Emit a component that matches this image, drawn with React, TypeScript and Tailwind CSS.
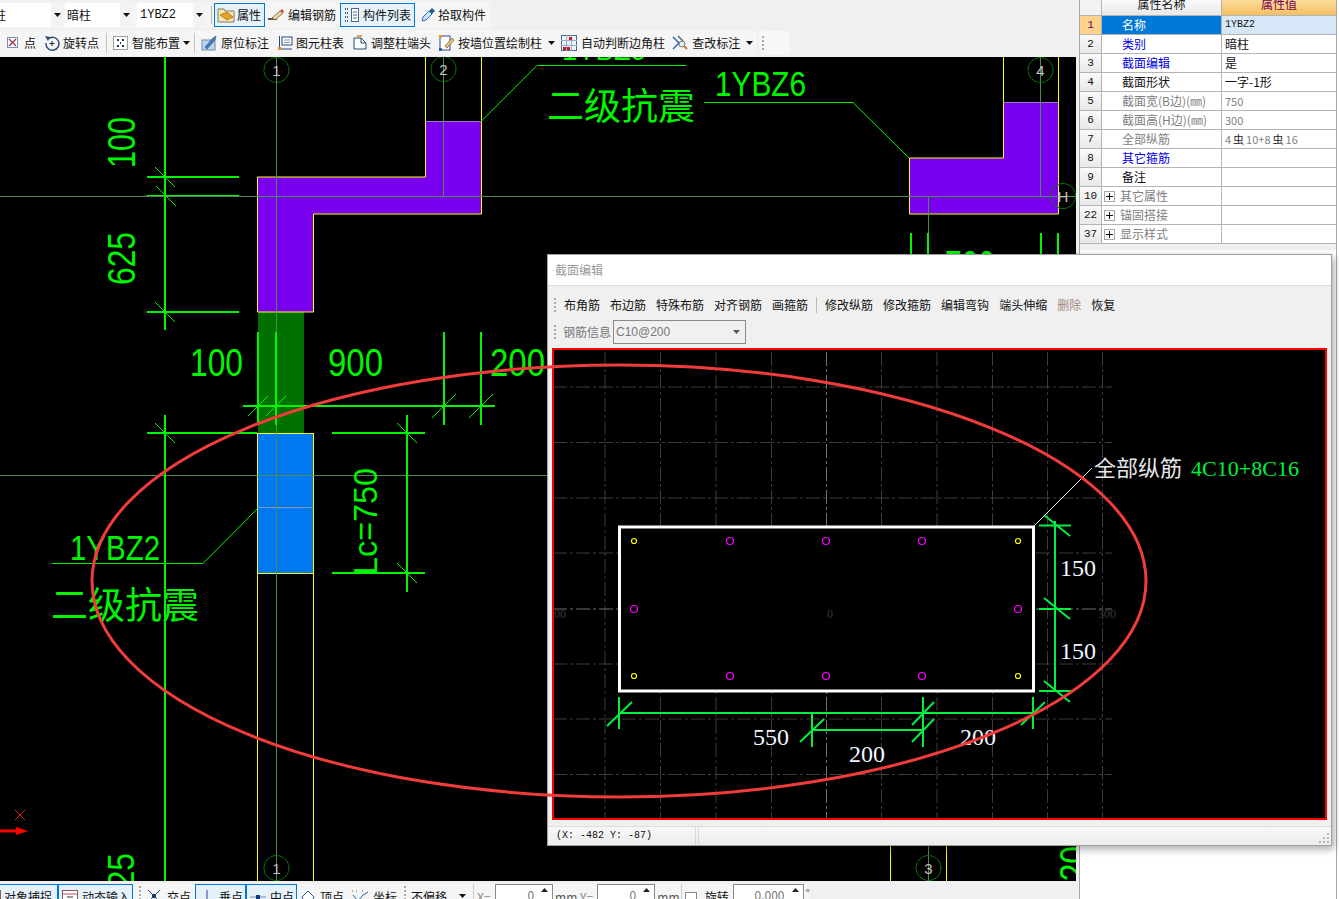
import type { ReactNode } from "react";

const CJK = "'Noto Sans CJK SC', sans-serif";
const SANS = "'Liberation Sans', sans-serif";
const SERIF = "'Liberation Serif', serif";
const GREEN = "#00f500";
const AXIS = "#4c8c4c";
const YELLOW = "#ffff00";

function Caret() {
  return (
    <svg width="7" height="4" className="shrink-0">
      <path d="M0 0h7L3.5 4z" fill="#111" />
    </svg>
  );
}

function Grip() {
  return <div className="h-[14px] w-0 shrink-0 border-l-2 border-dotted border-[#a8a8a8]" />;
}

function Sep() {
  return <div className="h-[20px] w-px shrink-0 bg-[#c4c4c4]" />;
}

function Ic({ children, w = 16 }: { children: ReactNode; w?: number }) {
  return (
    <svg width={w} height="16" viewBox={`0 0 ${w} 16`} fill="none" className="shrink-0">
      {children}
    </svg>
  );
}

const icons = {
  prop: (
    <Ic w={18}>
      <path d="M1 2h6l1 2h9v11H1z" fill="#f5e6b8" stroke="#8a7a55" />
      <path d="M3 8l7-3 6 5-6 3z" fill="#e9a227" stroke="#9a6a10" strokeWidth=".7" />
    </Ic>
  ),
  edit: (
    <Ic>
      <path d="M0 12h9" stroke="#222" strokeWidth="1.5" />
      <path d="M4 11l8-7 3 2-8 7z" fill="#f1d9a0" stroke="#554" strokeWidth=".8" />
      <path d="M12 4l2-2 2 2-1 2z" fill="#c9503a" />
    </Ic>
  ),
  list: (
    <Ic>
      <path d="M1 2h3M1 6h3M1 10h3M1 14h3" stroke="#555" strokeDasharray="1 1" strokeWidth="2" />
      <rect x="7.500" y="1.500" width="7" height="13" fill="#fff" stroke="#4a6a90" />
      <path d="M9 5h4M9 8h4M9 11h4" stroke="#4a6a90" />
    </Ic>
  ),
  pick: (
    <Ic>
      <path d="M2 14l1-4 6-6 3 3-6 6z" fill="#cfe6fa" stroke="#2a6fb0" />
      <path d="M9 4l3-3 3 3-3 3z" fill="#1f5d99" />
    </Ic>
  ),
  point: (
    <Ic w={11}>
      <rect x=".5" y="2.500" width="10" height="10" fill="#fff" stroke="#7d8fb0" />
      <path d="M2 4l7 7M9 4l-7 7" stroke="#a0304a" strokeWidth="1.200" />
    </Ic>
  ),
  rotate: (
    <Ic>
      <path d="M4 4a6.500 6.500 0 1 1-2 4" stroke="#2a4a70" strokeWidth="1.400" />
      <path d="M1 1l5 1-2 4z" fill="#2a4a70" />
      <path d="M8 6v5M5.500 8.500h5" stroke="#222" />
    </Ic>
  ),
  smart: (
    <Ic w={15}>
      <rect x=".5" y="1.500" width="14" height="13" fill="#fff" stroke="#444" strokeDasharray="1 1" />
      <path d="M4 5h2M9 5h2M4 11h2M9 11h2M7 8h1" stroke="#1d3a66" strokeWidth="2" />
    </Ic>
  ),
  origin: (
    <Ic>
      <rect x="1" y="5" width="13" height="10" fill="#bcd4ec" stroke="#6d8cb0" />
      <path d="M4 12l8-9 3-2-1 4-8 9z" fill="#3f78b5" stroke="#2a5a90" strokeWidth=".6" />
    </Ic>
  ),
  table: (
    <Ic>
      <path d="M2.500 1v13H15" stroke="#2a4a80" />
      <rect x="5" y="2" width="10" height="8" fill="#fff" stroke="#2a4a80" />
      <path d="M7 5h6M7 7.500h6" stroke="#7a9ac0" />
      <rect x="1" y="12" width="3" height="3" fill="#e08a20" />
    </Ic>
  ),
  adjust: (
    <Ic>
      <path d="M2 14V3h7l5 5v6z" fill="#fff" stroke="#2a4a70" />
      <path d="M9 3v5h5" stroke="#2a4a70" />
      <path d="M5 1h5" stroke="#d08a30" strokeWidth="1.500" />
    </Ic>
  ),
  wall: (
    <Ic>
      <rect x="1" y="1" width="10" height="14" fill="#fff" stroke="#2a4a90" />
      <rect x="0" y="0" width="3" height="3" fill="#e0a020" />
      <rect x="0" y="13" width="3" height="3" fill="#3060c0" />
      <path d="M6 11l7-8 2 2-7 8z" fill="#e9c27a" stroke="#7a5a20" strokeWidth=".7" />
    </Ic>
  ),
  corner: (
    <Ic>
      <rect x=".5" y=".5" width="15" height="15" fill="#eef2f8" stroke="#4a6a90" />
      <path d="M5.500 0v16M10.500 0v16M0 5.500h16M0 10.500h16" stroke="#9aaccc" />
      <path d="M2 12h3v3H2zM6 12h3v3H6zM8 2h3v3H8z" fill="#d01818" />
    </Ic>
  ),
  check: (
    <Ic>
      <path d="M1 2l6 6-6 6" stroke="#2a5ab0" strokeWidth="1.400" />
      <path d="M6 1l5 5" stroke="#666" strokeWidth="1.500" />
      <circle cx="10" cy="9" r="3" fill="#dcecf8" stroke="#777" />
      <path d="M12 11l3 3" stroke="#c08030" strokeWidth="2" />
    </Ic>
  ),
  snap: (
    <Ic>
      <rect x=".5" y="1.500" width="15" height="13" fill="#fff" stroke="#8a5a5a" />
      <path d="M1 5h14" stroke="#b05050" />
      <path d="M5 8h6" stroke="#333" />
    </Ic>
  ),
  cross: (
    <Ic w={14}>
      <path d="M1 1l12 12M13 1L1 13" stroke="#2a4a80" />
      <rect x="5" y="5" width="4" height="4" fill="#123a80" />
    </Ic>
  ),
  perp: (
    <Ic>
      <path d="M8 1v11M0 13h16" stroke="#2a4a80" />
      <rect x="6" y="11" width="4" height="4" fill="#123a80" />
    </Ic>
  ),
  mid: (
    <Ic>
      <path d="M0 8h16" stroke="#7a90b0" />
      <rect x="6" y="6" width="4" height="4" fill="#123a80" />
    </Ic>
  ),
  vertex: (
    <Ic w={14}>
      <path d="M7 2l6 6-3 6H4L1 8z" fill="#fff" stroke="#2a5a9a" />
    </Ic>
  ),
  coord: (
    <Ic w={17}>
      <path d="M1 6l5 6 5-6 5-3" stroke="#2a5a9a" />
      <path d="M4 2h2M10 2h2M0 2h1" stroke="#555" strokeDasharray="1 1" />
      <rect x="5" y="10" width="3" height="3" fill="#123a80" />
    </Ic>
  ),
};

function Tool({ icon, label, className = "", gapClass = "gap-1" }: { icon: ReactNode; label: string; className?: string; gapClass?: string }) {
  return (
    <div className={`flex shrink-0 items-center whitespace-nowrap ${gapClass} ${className}`}>
      {icon}
      <span>{label}</span>
    </div>
  );
}

function Combo({ label, className, arrowClass }: { label: string; className: string; arrowClass: string }) {
  return (
    <div className={`flex h-[24px] shrink-0 items-center bg-white ${className}`}>
      <span className="flex-1 whitespace-nowrap">{label}</span>
      <div className={`flex h-full w-[12px] items-center justify-center bg-[#f3f3f3] ${arrowClass}`}>
        <Caret />
      </div>
    </div>
  );
}

function TopBars() {
  return (
    <div className="h-[57px] shrink-0 bg-[#f0f0f0] text-[12px] leading-none text-[#111]">
      <div className="flex h-[29px] items-start pt-[2px]">
        <div className="flex h-[26px] w-[491px] shrink-0 items-center rounded-r bg-[#f5f5f5]">
          <Combo label="柱" className="w-[63px] -indent-[6px]" arrowClass="ml-auto" />
          <Combo label="暗柱" className="ml-[2px] w-[67px] pl-[2px]" arrowClass="" />
          <Combo label="1YBZ2" className="ml-[5px] w-[68px] pl-[3px] font-['Liberation_Mono',monospace]" arrowClass="" />
          <div className="ml-[6px] mr-[2px] h-[18px] w-px bg-[#bbb]" />
          <Tool icon={icons.prop} label="属性" className="h-[24px] w-[51px] border border-[#0078d7] bg-[#e5f1fb] pl-[2px]" gapClass="gap-[2px]" />
          <Tool icon={icons.edit} label="编辑钢筋" className="ml-[3px] w-[72px]" />
          <Tool icon={icons.list} label="构件列表" className="h-[24px] w-[75px] border border-[#0078d7] bg-[#e5f1fb] pl-[3px]" gapClass="gap-[3px]" />
          <Tool icon={icons.pick} label="拾取构件" className="ml-[5px]" gapClass="gap-[2px]" />
        </div>
      </div>
      <div className="flex h-[27px] items-center">
        <div className="flex h-[26px] w-[757px] shrink-0 items-center rounded-r bg-[#f5f5f5] pl-[7px]">
          <Tool icon={icons.point} label="点" gapClass="gap-[6px]" />
          <Tool icon={icons.rotate} label="旋转点" className="ml-[8px]" gapClass="gap-[3px]" />
          <div className="ml-[7px] mr-[6px]"><Sep /></div>
          <Tool icon={icons.smart} label="智能布置" />
          <div className="ml-[3px]"><Caret /></div>
          <div className="ml-[4px] mr-[6px]"><Sep /></div>
          <Tool icon={icons.origin} label="原位标注" />
          <Tool icon={icons.table} label="图元柱表" className="ml-[8px]" gapClass="gap-[3px]" />
          <Tool icon={icons.adjust} label="调整柱端头" className="ml-[8px]" gapClass="gap-[3px]" />
          <Tool icon={icons.wall} label="按墙位置绘制柱" className="ml-[8px]" gapClass="gap-[3px]" />
          <div className="ml-[6px]"><Caret /></div>
          <Tool icon={icons.corner} label="自动判断边角柱" className="ml-[6px]" />
          <Tool icon={icons.check} label="查改标注" className="ml-[7px]" />
          <div className="ml-[6px]"><Caret /></div>
        </div>
        <div className="ml-[2px] flex h-[24px] w-[31px] items-center rounded bg-[#f7f7f7] pl-[3px]">
          <Grip />
        </div>
      </div>
    </div>
  );
}

function Spin({ value, className }: { value: string; className: string }) {
  return (
    <div className={`relative h-[26px] shrink-0 border border-[#8a8a8a] bg-white pt-[4px] text-right text-[#777] ${className}`}>
      <span className="mr-[18px]">{value}</span>
      <svg width="7" height="4" className="absolute right-[4px] top-[3px]">
        <path d="M0 4h7L3.500 0z" fill="#222" />
      </svg>
    </div>
  );
}

function BottomBar() {
  const on = "h-[26px] border border-[#0078d7] bg-[#e5f1fb] pl-[3px]";
  return (
    <div className="flex h-[18px] shrink-0 items-start overflow-hidden bg-[#f0f0f0] pt-[3px] text-[12px] leading-none text-[#111]">
      <div className="flex h-[26px] w-[810px] shrink-0 items-start rounded-r bg-[#f5f5f5]">
        <Tool icon={icons.snap} label="对象捕捉" className={`-ml-[19px] w-[77px] ${on}`} gapClass="gap-[3px]" />
        <Tool icon={icons.snap} label="动态输入" className={`w-[75px] ${on}`} gapClass="gap-[4px]" />
        <div className="ml-[6px] mt-[2px]"><Grip /></div>
        <Tool icon={icons.cross} label="交点" className="ml-[6px] h-[26px]" gapClass="gap-[6px]" />
        <Tool icon={icons.perp} label="垂点" className={`ml-[4px] w-[51px] ${on}`} gapClass="gap-[4px]" />
        <Tool icon={icons.mid} label="中点" className={`w-[51px] ${on}`} gapClass="gap-[4px]" />
        <Tool icon={icons.vertex} label="顶点" className="ml-[4px] h-[26px]" gapClass="gap-[5px]" />
        <Tool icon={icons.coord} label="坐标" className="ml-[8px] h-[26px]" />
        <div className="ml-[7px] mt-[2px]"><Grip /></div>
        <div className="ml-[5px] flex h-[26px] w-[50px] items-center">不偏移</div>
        <div className="mt-[10px]"><Caret /></div>
        <div className="ml-[7px] mr-[3px] h-[26px] w-px bg-[#ccc]" />
        <span className="mt-[7px] w-[19px] text-[#888]">X=</span>
        <Spin value="0" className="w-[58px]" />
        <span className="ml-[2px] mt-[7px] w-[26px] text-[#555]">mm</span>
        <span className="mt-[7px] w-[18px] text-[#888]">Y=</span>
        <Spin value="0" className="w-[58px]" />
        <span className="ml-[2px] mt-[7px] w-[25px] text-[#555]">mm</span>
        <div className="h-[26px] w-px bg-[#ccc]" />
        <div className="ml-[3px] mt-[8px] h-[12px] w-[12px] border border-[#888] bg-white" />
        <div className="ml-[8px] flex h-[26px] w-[29px] items-center">旋转</div>
        <Spin value="0.000" className="w-[71px]" />
        <span className="ml-[2px] mt-[3px] text-[#555]">°</span>
      </div>
    </div>
  );
}

function Tick({ x, y, dir = 1, r = 10 }: { x: number; y: number; dir?: number; r?: number }) {
  return <line x1={x - r} y1={y - dir * r} x2={x + r} y2={y + dir * r} stroke={GREEN} strokeWidth="1" />;
}

function AxisMark({ x, y, t }: { x: number; y: number; t: string }) {
  return (
    <g>
      <circle cx={x} cy={y} r="12.500" stroke="#0d7a0d" fill="none" strokeDasharray="7 .5" />
      <text x={x} y={y + 6} textAnchor="middle" fontFamily={SANS} fontSize="15" fill="#c4c4c4">
        {t}
      </text>
    </g>
  );
}

function VText({ x, y, len, size, t }: { x: number; y: number; len: number; size: number; t: string }) {
  return (
    <text transform={`translate(${x} ${y}) rotate(-90)`} fontFamily={SANS} fontSize={size} fill={GREEN} textLength={len} lengthAdjust="spacingAndGlyphs">
      {t}
    </text>
  );
}

function HText({ x, y, len, size = 38, t }: { x: number; y: number; len: number; size?: number; t: string }) {
  return (
    <text x={x} y={y} fontFamily={SANS} fontSize={size} fill={GREEN} textLength={len} lengthAdjust="spacingAndGlyphs">
      {t}
    </text>
  );
}

function MainCanvas() {
  return (
    <div className="flex min-h-0 flex-1 bg-[#f0f0f0]">
      <svg width="1076" height="824" viewBox="0 57 1076 824" className="block bg-black">
        {/* columns */}
        <path d="M425.500 57V121M481.500 57V121M1003.500 57V102M1058.500 57V102M257.500 573V881M313.500 573V881M890.500 600V881M946.500 600V881" stroke={YELLOW} />
        <rect x="258" y="312" width="46" height="121" fill="#007000" />
        <path d="M257.500 177H425.500V121.500H481.500V214H313.500V312H257.500Z" fill="#7a00f0" stroke={YELLOW} />
        <path d="M909.500 158H1003.500V102.500H1058.500V214H909.500Z" fill="#7a00f0" stroke={YELLOW} />
        <path d="M426 121.500H481M1004 102.500H1058" stroke="#9a7ac0" />
        <rect x="257.500" y="433.500" width="56" height="140" fill="#0078f0" stroke={YELLOW} strokeWidth="1" />
        <line x1="257" y1="507.500" x2="314" y2="507.500" stroke="#7a9ab8" />

        {/* axis lines */}
        <path d="M276.500 57V881M443.500 57V196M1040.500 57V196M928.500 196V881M0 196.500H1076M0 475.500H1076" stroke={AXIS} />
        <AxisMark x={276.500} y={70} t="1" />
        <AxisMark x={443.500} y={69} t="2" />
        <AxisMark x={1040.500} y={70} t="4" />
        <AxisMark x={1063} y={196} t="H" />
        <AxisMark x={928.500} y={868} t="3" />
        <AxisMark x={276.500} y={868} t="1" />

        {/* dimensions */}
        <path
          d="M165 57V330M147 177H239M147 312H239M165 415V881M147 433H257M332 433H425M332 573H425M407 415V592M243 406H495M258 332V425M276 332V425M444 332V425M481 332V425M911 233V255M928 233V255M1041 233V255M1058 233V255"
          stroke={GREEN}
          strokeWidth="2"
        />
        <line x1="147" y1="195.500" x2="239" y2="195.500" stroke={GREEN} />
        <Tick x={165} y={177} />
        <Tick x={166} y={196} />
        <Tick x={165} y={312} />
        <Tick x={165} y={433} />
        <Tick x={407} y={433} />
        <Tick x={407} y={573} />
        <Tick x={258} y={406} dir={-1} />
        <Tick x={276} y={406} dir={-1} />
        <Tick x={444} y={406} dir={-1} r={12} />
        <Tick x={481} y={406} dir={-1} r={12} />

        <VText x={135} y={168} len={51} size={38} t="100" />
        <VText x={135} y={285} len={53} size={38} t="625" />
        <VText x={377} y={575} len={107} size={33} t="Lc=750" />
        <VText x={134} y={906} len={53} size={36} t="625" />
        <VText x={1087} y={899} len={53} size={38} t="220" />
        <HText x={190} y={376} len={53} t="100" />
        <HText x={328} y={376} len={55} t="900" />
        <HText x={490} y={376} len={55} t="200" />
        <HText x={945} y={278} len={50} t="700" />
        <HText x={70} y={560} len={90} size={35} t="1YBZ2" />
        <HText x={715} y={96} len={91} size={35} t="1YBZ6" />
        <HText x={562} y={60} len={84} size={32} t="1YBZ5" />

        {/* leaders */}
        <path d="M481.500 121L537 65.500H686M704 102.500H853L909 158M52 563.500H203L257 509" stroke={GREEN} fill="none" />
        <text x="547" y="120" fontFamily={CJK} fontSize="37" fill={GREEN}>二级抗震</text>
        <text x="51" y="619" fontFamily={CJK} fontSize="37" fill={GREEN}>二级抗震</text>

        {/* origin marker */}
        <path d="M15 810l10 10M25 810L15 820" stroke="#e02020" />
        <path d="M0 829.500H16V827L28 831L16 835V832.500H0Z" fill="#ff0000" />
      </svg>
      <div className="w-[3px]" />
    </div>
  );
}

const rows: { n: string; name: string; val: ReactNode; tone: string; plus?: boolean; valTone?: string }[] = [
  { n: "2", name: "类别", val: "暗柱", tone: "text-[#0000e0]" },
  { n: "3", name: "截面编辑", val: "是", tone: "text-[#0000e0]" },
  { n: "4", name: "截面形状", val: "一字-1形", tone: "text-[#111]" },
  { n: "5", name: "截面宽(B边)(㎜)", val: "750", tone: "text-[#808080]", valTone: "text-[#808080] text-[11px]" },
  { n: "6", name: "截面高(H边)(㎜)", val: "300", tone: "text-[#808080]", valTone: "text-[#808080] text-[11px]" },
  {
    n: "7",
    name: "全部纵筋",
    val: (
      <>
        4<span className="mx-[2px] text-[#222]">虫</span>10+8<span className="mx-[2px] text-[#222]">虫</span>16
      </>
    ),
    tone: "text-[#808080]",
    valTone: "text-[#808080] text-[11px]",
  },
  { n: "8", name: "其它箍筋", val: "", tone: "text-[#0000e0]" },
  { n: "9", name: "备注", val: "", tone: "text-[#111]" },
  { n: "10", name: "其它属性", val: "", tone: "text-[#808080]", plus: true },
  { n: "22", name: "锚固搭接", val: "", tone: "text-[#808080]", plus: true },
  { n: "37", name: "显示样式", val: "", tone: "text-[#808080]", plus: true },
];

function Plus() {
  return (
    <div className="ml-[2px] flex h-[11px] w-[11px] shrink-0 items-center justify-center border border-[#aaa] bg-white">
      <svg width="7" height="7">
        <path d="M0 3.500h7M3.500 0v7" stroke="#111" />
      </svg>
    </div>
  );
}

function PropertyPanel() {
  return (
    <div className="h-full w-[260px] shrink-0 bg-white text-[12px] leading-none text-[#111]">
      <div className="h-full w-[258px] border-x border-[#a8a8a8]">
        <div className="h-[250px] w-[256px] bg-[#f0f0f0]">
          <div className="flex h-[16px] overflow-hidden border-b border-[#b4b4b4]">
            <div className="w-[22px] border-r border-[#b4b4b4] bg-[#f2f2f2]" />
            <div className="w-[120px] border-r border-[#b4b4b4] bg-gradient-to-b from-[#fafafa] to-[#e8e8e8] text-center">
              <span className="relative -top-[2px]">属性名称</span>
            </div>
            <div className="flex-1 bg-gradient-to-b from-[#fcdc98] to-[#f3bf62] text-center text-[#7a0050]">
              <span className="relative -top-[2px]">属性值</span>
            </div>
          </div>
          <div className="flex h-[19px] border-b border-[#b4b4b4]">
            <div className="flex w-[22px] items-center justify-center border-r border-[#b4b4b4] bg-[#ffd28a] font-['Liberation_Mono',monospace] text-[11px] text-[#6a0070]">1</div>
            <div className="flex w-[120px] items-center border-r border-[#b4b4b4] bg-[#0078d7] pl-[20px] text-white">名称</div>
            <div className="flex flex-1 items-center bg-[#d6e8f8] pl-[3px] font-['Liberation_Mono',monospace] text-[10px]">1YBZ2</div>
          </div>
          {rows.map((r) => (
            <div key={r.n} className="flex h-[19px] border-b border-[#b4b4b4]">
              <div className="flex w-[22px] items-center justify-center border-r border-[#b4b4b4] bg-gradient-to-b from-[#fafafa] to-[#e8e8e8] font-['Liberation_Mono',monospace] text-[11px]">{r.n}</div>
              <div className={`flex w-[120px] items-center whitespace-nowrap border-r border-[#b4b4b4] bg-white ${r.plus ? "" : "pl-[20px]"} ${r.tone}`}>
                {r.plus && <Plus />}
                <span className={r.plus ? "ml-[5px]" : ""}>{r.name}</span>
              </div>
              <div className={`flex flex-1 items-center whitespace-nowrap bg-white pl-[3px] ${r.valTone ?? ""}`}>{r.val}</div>
            </div>
          ))}
        </div>
      </div>
    </div>
  );
}

const DX = [605, 660.5, 716, 771.5, 826.5, 881.5, 937, 992.5, 1047.5, 1102.5];
const DY = [387, 442.5, 498, 553, 609, 664, 719, 774.5];
const CORNERS = [[634, 541], [1018, 541], [634, 676], [1018, 676]];
const BARS = [[730, 541], [826, 541], [922, 541], [730, 676], [826, 676], [922, 676], [634, 609], [1018, 609]];

function SectionCanvas() {
  return (
    <div className="mx-[4px] min-h-0 flex-1 border-2 border-[#ff0000] bg-black">
      <svg width="771" height="468" viewBox="554 350 771 468" className="block">
        {DX.map((x) => (
          <line key={x} x1={x} y1="352" x2={x} y2="818" stroke={x === 826.5 ? "#707070" : "#3c3c3c"} strokeDasharray="14 3 3 3" />
        ))}
        {DY.map((y) => (
          <line key={y} x1="553" y1={y} x2="1112" y2={y} stroke={y === 609 ? "#707070" : "#3c3c3c"} strokeDasharray="14 3 3 3" />
        ))}
        <rect x="619.500" y="527" width="414" height="164" stroke="#fff" strokeWidth="3" />
        {CORNERS.map(([x, y]) => (
          <circle key={`${x}-${y}`} cx={x} cy={y} r="2.500" stroke="#ffff00" strokeWidth="1.200" />
        ))}
        {BARS.map(([x, y]) => (
          <circle key={`${x}-${y}`} cx={x} cy={y} r="3.500" stroke="#ff00ff" strokeWidth="1.200" />
        ))}
        <path
          d="M619 697V729M923 697V747M812 713V747M1033 697V729M619 713H1033M812 730H923M1055 521V692M1039 525.500H1071M1039 609H1071M1039 691H1071M607 726L632 702M800 742L824 719M912 725L934 702M912 742L934 719M1021 725L1045 702M1044 515L1070 536M1044 598L1070 619M1044 681L1070 702"
          stroke="#00f040"
          strokeWidth="2"
        />
        <path d="M1034 526L1092 468" stroke="#e8e8e8" />
        <g fontFamily={SERIF} fontSize="24" fill="#f0f6ff">
          <text x="753" y="745">550</text>
          <text x="849" y="762">200</text>
          <text x="960" y="745">200</text>
          <text x="1060" y="576">150</text>
          <text x="1060" y="659">150</text>
        </g>
        <g fontFamily={SERIF} fontSize="12" fill="#3a3a3a">
          <text x="827" y="618">0</text>
          <text x="554" y="618">00</text>
          <text x="1098" y="618">300</text>
        </g>
        <text x="1094" y="476" fontFamily={CJK} fontSize="22" fill="#e6e6e6">全部纵筋</text>
        <text x="1191" y="476" fontFamily={SERIF} fontSize="22" fill="#00f040" textLength="108" lengthAdjust="spacingAndGlyphs">4C10+8C16</text>
      </svg>
    </div>
  );
}

function SectionDialog() {
  const tools = ["布角筋", "布边筋", "特殊布筋", "对齐钢筋", "画箍筋"];
  const tools2 = ["修改纵筋", "修改箍筋", "编辑弯钩", "端头伸缩"];
  return (
    <div className="absolute left-[547px] top-[254px] flex h-[592px] w-[785px] flex-col border border-[#a0a0a0] bg-[#f0f0f0] text-[12px] leading-none text-[#111] shadow-[2px_3px_8px_rgba(0,0,0,0.35)]">
      <div className="flex h-[31px] shrink-0 items-center border-b border-[#dcdcdc] bg-white pl-[7px] text-[#9a9a9a]">截面编辑</div>
      <div className="mt-[8px] flex h-[22px] shrink-0 items-center gap-[10px] pl-[6px]">
        <Grip />
        <div className="-ml-[2px] flex items-center gap-[10px]">
          {tools.map((t) => <span key={t}>{t}</span>)}
        </div>
        <div className="mx-[-2px] h-[16px] w-px bg-[#bbb]" />
        {tools2.map((t) => <span key={t}>{t}</span>)}
        <span className="text-[#a08a80]">删除</span>
        <span>恢复</span>
      </div>
      <div className="mt-[4px] flex h-[24px] shrink-0 items-center pl-[6px]">
        <Grip />
        <span className="ml-[7px] w-[50px] text-[#777]">钢筋信息</span>
        <div className="flex h-[24px] w-[133px] items-center border border-[#8a8a8a] bg-[#f0f0f0] pl-[2px] font-['Liberation_Sans',sans-serif] text-[#777]">
          <span className="flex-1">C10@200</span>
          <svg width="7" height="4" className="mr-[5px]">
            <path d="M0 0h7L3.500 4z" fill="#555" />
          </svg>
        </div>
      </div>
      <div className="mt-[4px] flex min-h-0 flex-1 flex-col">
        <SectionCanvas />
      </div>
      <div className="mt-[6px] flex h-[19px] shrink-0 items-center border-t border-[#dcdcdc] bg-gradient-to-b from-[#f8f8f8] to-[#ececec] font-['Liberation_Mono',monospace] text-[10px]">
        <div className="flex h-full w-[148px] items-center border-r border-[#d8d8d8] pl-[8px]">(X: -482 Y: -87)</div>
        <div className="relative ml-[2px] h-full flex-1 border-l border-[#d8d8d8]">
          <svg width="12" height="12" className="absolute bottom-[1px] right-[1px]">
            <path d="M9 1h2v2H9zM5 5h2v2H5zM9 5h2v2H9zM1 9h2v2H1zM5 9h2v2H5zM9 9h2v2H9z" fill="#b8b8b8" />
          </svg>
        </div>
      </div>
    </div>
  );
}

export default function App() {
  return (
    <div className="relative flex h-[899px] w-[1339px] overflow-hidden bg-white font-['Noto_Sans_CJK_SC',sans-serif]">
      <div className="flex h-full w-[1079px] shrink-0 flex-col">
        <TopBars />
        <MainCanvas />
        <BottomBar />
      </div>
      <PropertyPanel />
      <SectionDialog />
      {/* hand-drawn red ellipse on top of everything */}
      <svg width="1339" height="899" className="pointer-events-none absolute left-0 top-0">
        <ellipse cx="619" cy="581" rx="527" ry="216" fill="none" stroke="#f23c3c" strokeWidth="3" />
      </svg>
    </div>
  );
}
